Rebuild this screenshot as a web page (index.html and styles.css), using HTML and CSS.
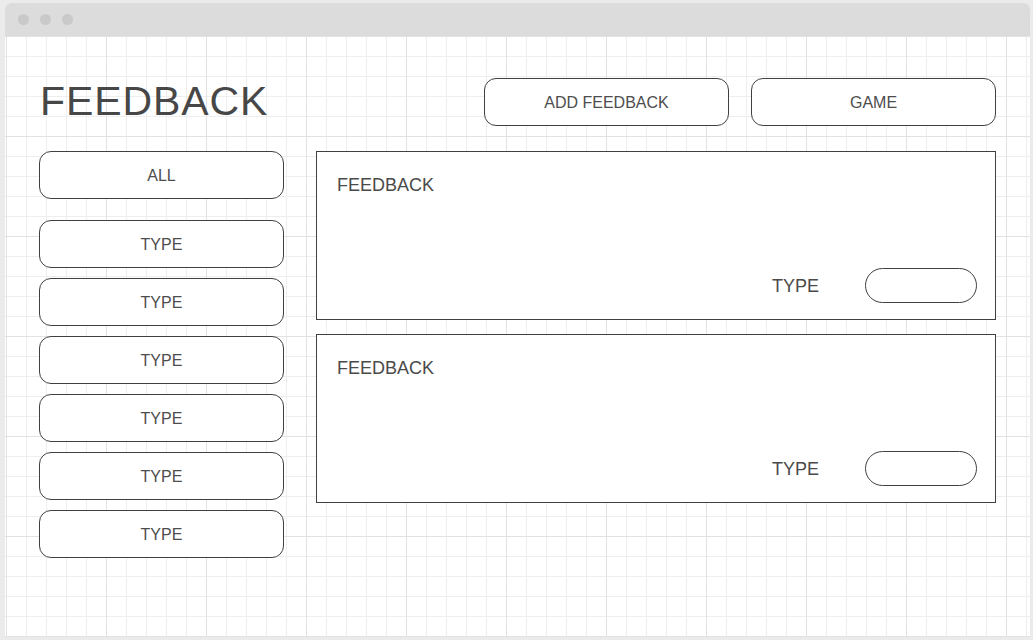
FILE: index.html
```html
<!DOCTYPE html>
<html lang="en">
<head>
<meta charset="utf-8">
<title>Feedback</title>
<link rel="stylesheet" href="styles.css">
</head>
<body>
<div class="window">
  <div class="titlebar">
    <span class="dot"></span><span class="dot"></span><span class="dot"></span>
  </div>
  <div class="canvas">
    <header class="header">
      <h1 class="title">FEEDBACK</h1>
      <div class="actions">
        <button class="btn">ADD FEEDBACK</button>
        <button class="btn">GAME</button>
      </div>
    </header>
    <div class="body">
      <nav class="sidebar">
        <button class="btn side-all">ALL</button>
        <div class="types">
          <button class="btn">TYPE</button>
          <button class="btn">TYPE</button>
          <button class="btn">TYPE</button>
          <button class="btn">TYPE</button>
          <button class="btn">TYPE</button>
          <button class="btn">TYPE</button>
        </div>
      </nav>
      <main class="list">
        <article class="card">
          <div class="card-title">FEEDBACK</div>
          <div class="card-foot">
            <span class="card-type">TYPE</span>
            <span class="pill"></span>
          </div>
        </article>
        <article class="card">
          <div class="card-title">FEEDBACK</div>
          <div class="card-foot">
            <span class="card-type">TYPE</span>
            <span class="pill"></span>
          </div>
        </article>
      </main>
    </div>
  </div>
</div>
</body>
</html>
```
FILE: styles.css
```css
html, body {
  margin: 0;
  padding: 0;
}
body {
  background: #ebebeb;
  font-family: "Liberation Sans", Arial, sans-serif;
  color: #4a4a4a;
  height: 640px;
  overflow: hidden;
}
.window {
  margin: 3px 0 0 5px;
  width: 1025px;
  height: 634px;
  border-radius: 6px 6px 0 0;
  overflow: hidden;
  display: flex;
  flex-direction: column;
  background: #fff;
}
.titlebar {
  height: 33px;
  flex: none;
  background: #dcdcdc;
  display: flex;
  align-items: center;
  gap: 11px;
  padding-left: 13px;
}
.dot {
  width: 11px;
  height: 11px;
  border-radius: 50%;
  background: #c9c9c9;
}
.canvas {
  flex: 1;
  padding: 42px 34px 0 34px;
  background-color: #fff;
  background-image:
    linear-gradient(to right, #e2e2e2 1px, transparent 1px),
    linear-gradient(to bottom, #e2e2e2 1px, transparent 1px),
    linear-gradient(to right, #eeeeee 1px, transparent 1px),
    linear-gradient(to bottom, #eeeeee 1px, transparent 1px);
  background-size: 100px 100px, 100px 100px, 20px 20px, 20px 20px;
  background-position: 1px 0, 1px 0, 1px 0, 1px 0;
}
.header {
  display: flex;
  align-items: center;
  justify-content: space-between;
  height: 48px;
}
.title {
  margin: 0 0 0 1px;
  font-size: 41px;
  font-weight: normal;
  letter-spacing: 0.9px;
  line-height: 48px;
  color: #474747;
  position: relative;
  top: -1px;
}
.actions {
  display: flex;
  gap: 22px;
}
.btn {
  box-sizing: border-box;
  width: 245px;
  height: 48px;
  border: 1px solid #404040;
  border-radius: 12px;
  background: #fff;
  font-family: "Liberation Sans", Arial, sans-serif;
  font-size: 16px;
  color: #4d4d4d;
  padding: 2px 0 0 0;
  display: flex;
  align-items: center;
  justify-content: center;
}
.body {
  display: flex;
  gap: 32px;
  margin-top: 25px;
}
.sidebar {
  width: 245px;
  display: flex;
  flex-direction: column;
}
.side-all {
  margin-bottom: 21px;
}
.types {
  display: flex;
  flex-direction: column;
  gap: 10px;
}
.list {
  width: 680px;
  display: flex;
  flex-direction: column;
  gap: 14px;
}
.card {
  box-sizing: border-box;
  height: 169px;
  border: 1px solid #404040;
  background: #fff;
  padding: 23px 18px 16px 20px;
  display: flex;
  flex-direction: column;
  justify-content: space-between;
}
.card-title {
  font-size: 18px;
  line-height: 20px;
  color: #4a4a4a;
}
.card-foot {
  display: flex;
  justify-content: flex-end;
  align-items: center;
  gap: 46px;
}
.card-type {
  font-size: 18px;
  line-height: 20px;
  color: #4a4a4a;
}
.pill {
  box-sizing: border-box;
  width: 112px;
  height: 35px;
  border: 1px solid #404040;
  border-radius: 18px;
  background: #fff;
}
```
